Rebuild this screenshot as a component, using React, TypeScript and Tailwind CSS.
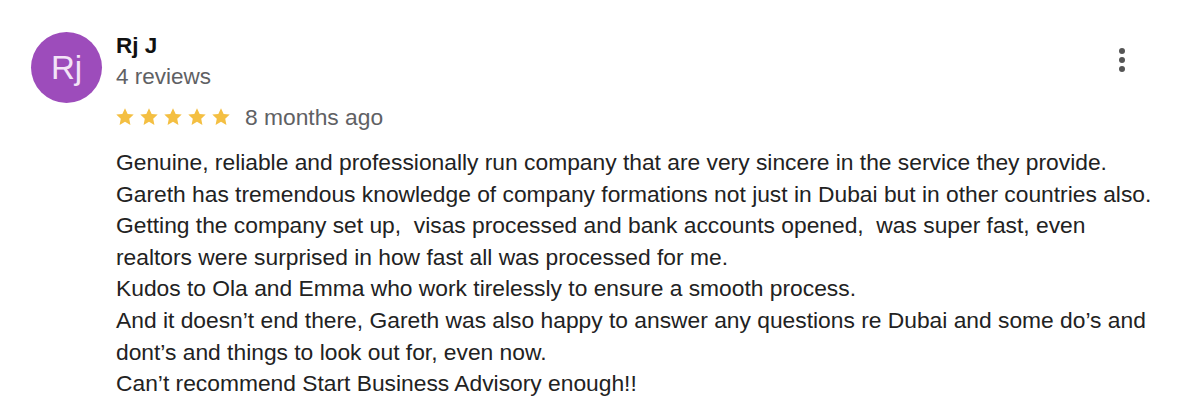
import React from "react";

const Star = () => (
  <svg width="22" height="22" viewBox="0 0 24 24" className="block">
    <path
      d="M12 2.5l2.9 6.1 6.6.8-4.9 4.6 1.3 6.6L12 17.3l-5.9 3.3 1.3-6.6-4.9-4.6 6.6-.8z"
      fill="#f4bf42"
    />
  </svg>
);

const lines = [
  "Genuine, reliable and professionally run company that are very sincere in the service they provide.",
  "Gareth has tremendous knowledge of company formations not just in Dubai but in other countries also.",
  "Getting the company set up,\u00a0 visas processed and bank accounts opened,\u00a0 was super fast, even",
  "realtors were surprised in how fast all was processed for me.",
  "Kudos to Ola and Emma who work tirelessly to ensure a smooth process.",
  "And it doesn\u2019t end there, Gareth was also happy to answer any questions re Dubai and some do\u2019s and",
  "dont\u2019s and things to look out for, even now.",
  "Can\u2019t recommend Start Business Advisory enough!!",
];

export default function App() {
  return (
    <div className="w-[1200px] h-[411px] bg-white overflow-hidden font-['Liberation_Sans',Arial,sans-serif]">
      <div className="flex pl-[31px] pt-[32px] pr-[75px]">
        <div className="w-[71px] h-[71px] rounded-full bg-[#9d4cbb] flex items-center justify-center text-[#f3e4f7] text-[33px] leading-none shrink-0">
          Rj
        </div>
        <div className="ml-[14px] flex-1 min-w-0">
          <div className="flex justify-between -mt-[1px]">
            <div>
              <div className="text-[22.5px] font-bold text-[#111] leading-[30px]">Rj J</div>
              <div className="text-[22.5px] text-[#5f6164] leading-[30px] mt-[1px]">4 reviews</div>
            </div>
            <div className="flex flex-col gap-[3px] pt-[17px]">
              <span className="w-[6px] h-[6px] rounded-full bg-[#555]" />
              <span className="w-[6px] h-[6px] rounded-full bg-[#555]" />
              <span className="w-[6px] h-[6px] rounded-full bg-[#555]" />
            </div>
          </div>
          <div className="flex items-center mt-[10px] h-[30px]">
            <div className="flex gap-[2px] -ml-[2px]">
              <Star />
              <Star />
              <Star />
              <Star />
              <Star />
            </div>
            <span className="ml-[13px] text-[22.8px] text-[#5f6164]">8 months ago</span>
          </div>
          <div className="mt-[15px] text-[22.8px] leading-[31.6px] text-[#222]">
            {lines.map((l, i) => (
              <div key={i} className="whitespace-pre">{l}</div>
            ))}
          </div>
        </div>
      </div>
    </div>
  );
}
